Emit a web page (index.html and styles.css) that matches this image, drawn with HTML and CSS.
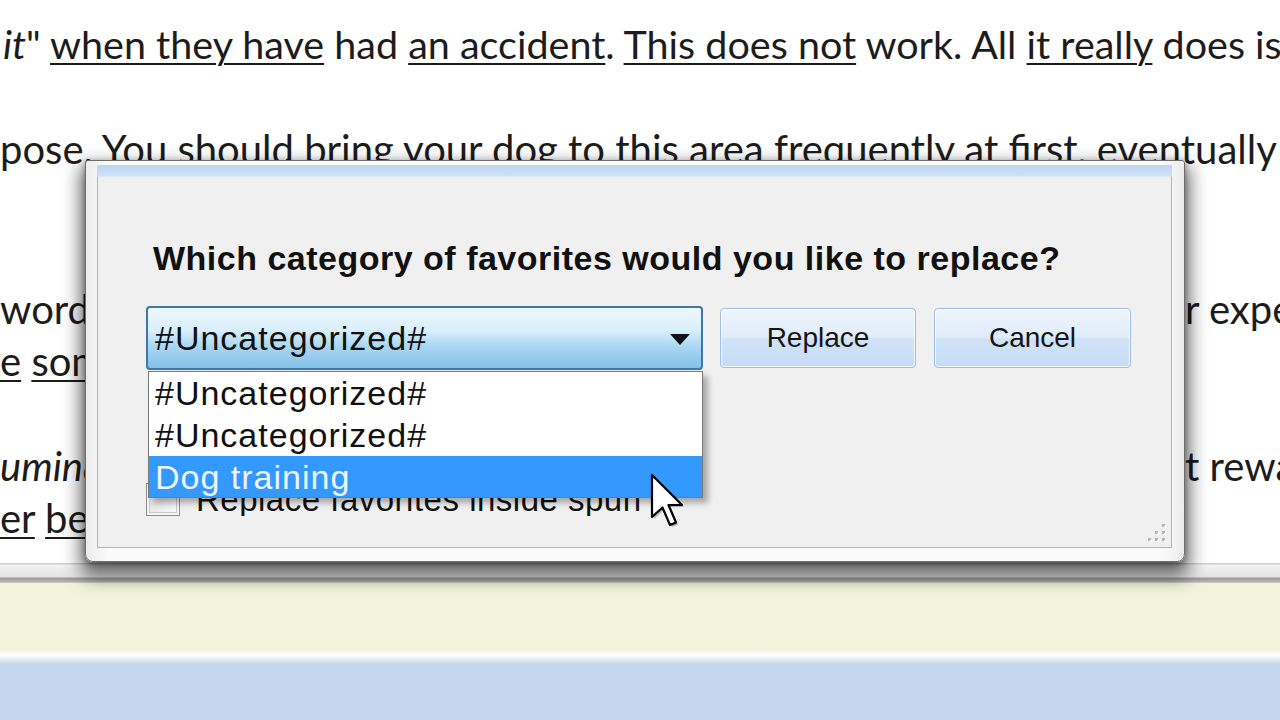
FILE: index.html
```html
<!DOCTYPE html>
<html lang="en">
<head>
<meta charset="utf-8">
<title>Replace favorites</title>
<link rel="stylesheet" href="styles.css">
</head>
<body>
<div class="screen">
  <div class="doc">
    <p class="ln l1"><i>it</i>" <u>when they have</u> had <u>an accident</u>. <u>This does not</u> work. All <u>it really</u> does is teach</p>
    <p class="ln l2">pose. You should bring your dog to this area frequently at first, eventually</p>
    <div class="para p3">
      <div class="split"><span>words</span><span>r experience</span></div>
      <div class="split"><span><u>e</u> <u>some</u></span><span></span></div>
    </div>
    <div class="para p4">
      <div class="split"><span><i>uminating</i></span><span>t reward</span></div>
      <div class="split"><span><u>er</u> <u>better</u></span><span></span></div>
    </div>
  </div>
  <div class="bands">
    <div class="band-rule"></div>
    <div class="band-yellow"></div>
    <div class="band-sep"></div>
    <div class="band-blue"></div>
  </div>

  <div class="dialog">
    <div class="strip"></div>
    <div class="client">
      <p class="title">Which category of favorites would you like to replace?</p>
      <div class="row">
        <div class="combo-wrap">
          <div class="combo">
            <span>#Uncategorized#</span>
            <svg class="arrow" width="20" height="12" viewBox="0 0 20 12"><path d="M0 0H20L10 11Z" fill="#111"/></svg>
          </div>
          <div class="list">
            <div class="item">#Uncategorized#</div>
            <div class="item">#Uncategorized#</div>
            <div class="item sel">Dog training</div>
          </div>
        </div>
        <div class="btn">Replace</div>
        <div class="btn btn-cancel">Cancel</div>
      </div>
      <div class="check-row">
        <div class="check"></div>
        <span class="check-label">Replace favorites inside spun text</span>
      </div>
      <svg class="grip" width="24" height="24" viewBox="0 0 24 24">
        <g fill="#b4b4b4">
          <rect x="17" y="3" width="3" height="3"/>
          <rect x="10" y="10" width="3" height="3"/><rect x="17" y="10" width="3" height="3"/>
          <rect x="3" y="17" width="3" height="3"/><rect x="10" y="17" width="3" height="3"/><rect x="17" y="17" width="3" height="3"/>
        </g>
        <g fill="#ffffff">
          <rect x="19" y="5" width="2" height="2"/>
          <rect x="12" y="12" width="2" height="2"/><rect x="19" y="12" width="2" height="2"/>
          <rect x="5" y="19" width="2" height="2"/><rect x="12" y="19" width="2" height="2"/><rect x="19" y="19" width="2" height="2"/>
        </g>
      </svg>
    </div>
  </div>

  <svg class="cursor" width="36" height="56" viewBox="0 0 36 56">
    <path d="M2 2 L2 44 L12.5 34.5 L20 52 L26 49.5 L18.5 32 L32 32 Z" fill="#000" opacity="0.25" transform="translate(2 2)"/>
    <path d="M2 2 L2 44 L12.5 34.5 L20 52 L26 49.5 L18.5 32 L32 32 Z" fill="#fff" stroke="#000" stroke-width="2.2" stroke-linejoin="round"/>
  </svg>
</div>
</body>
</html>
```

FILE: styles.css
```css
body {
  margin: 0;
  width: 1280px;
  height: 720px;
  overflow: hidden;
  background: #ffffff;
  font-family: Lato, "Liberation Sans", sans-serif;
}

.screen {
  position: relative;
  width: 1280px;
  height: 720px;
  overflow: hidden;
  display: flex;
  flex-direction: column;
}

/* ---------- background document ---------- */
.doc {
  height: 563px;
  flex: none;
  box-sizing: border-box;
  padding-top: 18px;
  color: #1c1c1c;
  font-size: 40px;
  line-height: 52px;
  overflow: hidden;
}

.ln {
  margin: 0;
  white-space: nowrap;
}

.l1 { margin-left: 3px; font-size: 39.5px; }
.l2 { margin-top: 53px; }
.p3 { margin-top: 108px; }
.p4 { margin-top: 53px; }

.split {
  display: grid;
  grid-template-columns: 1185px 1fr;
  white-space: nowrap;
}

.doc u {
  text-decoration-thickness: 2px;
  text-underline-offset: 4px;
}

/* ---------- bottom bands ---------- */
.bands {
  flex: 1;
  display: flex;
  flex-direction: column;
}

.band-rule {
  height: 20px;
  background: linear-gradient(#cfcfcf 0, #cfcfcf 1px, #f2f2f2 2px, #e4e4e4 14px, #9a9a9a 15px, #b5b5b5 19px, #dde0cc 20px);
}

.band-yellow {
  height: 67px;
  background: #f1f4da;
}

.band-sep {
  height: 14px;
  background: linear-gradient(#f1f3e6, #ffffff 35%, #e6edf6 65%, #c8d7ee);
}

.band-blue {
  flex: 1;
  background: #c5d6ee;
}

/* ---------- dialog ---------- */
.dialog {
  position: absolute;
  left: 85px;
  top: 160px;
  width: 1100px;
  height: 402px;
  box-sizing: border-box;
  border: 1px solid #6d6d6d;
  border-radius: 3px 3px 8px 8px;
  background: linear-gradient(90deg, #ececec, #fafafa 2%, #fafafa 98%, #ececec);
  padding: 4px 12px 13px 11px;
  display: flex;
  flex-direction: column;
  box-shadow: 0 10px 18px 5px rgba(0, 0, 0, 0.55), 0 2px 6px rgba(0, 0, 0, 0.35);
}

.strip {
  height: 11px;
  flex: none;
  background: linear-gradient(#bdd4f3, #d0e1f8);
}

.client {
  flex: 1;
  position: relative;
  background: #f0f0f0;
  border: 1px solid #b4b4b4;
  border-top-color: #e2e8f0;
  padding: 61px 0 0 48px;
  font-family: "Liberation Sans", Arial, sans-serif;
  color: #111111;
}

.title {
  margin: 0 0 0 7px;
  font-size: 34px;
  font-weight: bold;
  line-height: 40px;
  letter-spacing: 0.5px;
  white-space: nowrap;
}

.row {
  display: flex;
  align-items: center;
  margin-top: 28px;
}

.combo-wrap {
  position: relative;
  width: 557px;
  height: 64px;
  flex: none;
}

.combo {
  box-sizing: border-box;
  height: 64px;
  border: 2px solid #3d78aa;
  border-radius: 4px;
  background: linear-gradient(#eef7fd 0%, #d9eefb 38%, #acd8f3 62%, #84c0e8 100%);
  display: flex;
  align-items: center;
  justify-content: space-between;
  padding: 0 11px 0 7px;
  font-size: 34px;
  letter-spacing: 1px;
  white-space: nowrap;
}

.arrow { flex: none; margin-top: 4px; }

.list {
  position: absolute;
  left: 2px;
  top: 65px;
  width: 555px;
  height: 127px;
  box-sizing: border-box;
  border: 1px solid #7a7a7a;
  background: #ffffff;
  box-shadow: 5px 5px 6px rgba(0, 0, 0, 0.3);
}

.item {
  height: 42px;
  line-height: 42px;
  padding-left: 6px;
  font-size: 34px;
  letter-spacing: 1px;
  white-space: nowrap;
}

.item.sel {
  height: 41px;
  background: #3399ff;
  color: #eef5ff;
}

.btn {
  flex: none;
  width: 196px;
  height: 60px;
  box-sizing: border-box;
  margin-left: 17px;
  border: 1px solid #9fbde4;
  border-radius: 4px;
  background: linear-gradient(#edf5fd 0%, #e1ecfa 48%, #d0e2f7 52%, #c6dcf5 100%);
  box-shadow: inset 0 0 0 1px rgba(255, 255, 255, 0.75);
  display: flex;
  align-items: center;
  justify-content: center;
  font-size: 28px;
  color: #151515;
}

.btn-cancel {
  width: 197px;
  margin-left: 18px;
}

.check-row {
  display: flex;
  align-items: center;
  gap: 16px;
  margin-top: 113px;
}

.check {
  width: 34px;
  height: 33px;
  flex: none;
  box-sizing: border-box;
  border: 1px solid #8e8f8f;
  background: linear-gradient(135deg, #d9d9d9, #fbfbfb);
  box-shadow: inset 0 0 0 2px #f5f5f5, inset 0 0 0 3px #c9c9c9;
}

.check-label {
  width: 466px;
  overflow: hidden;
  font-size: 33px;
  line-height: 33px;
  letter-spacing: 0.5px;
  white-space: nowrap;
}

.grip {
  position: absolute;
  right: 2px;
  bottom: 2px;
}

.cursor {
  position: absolute;
  left: 650px;
  top: 473px;
}
```
